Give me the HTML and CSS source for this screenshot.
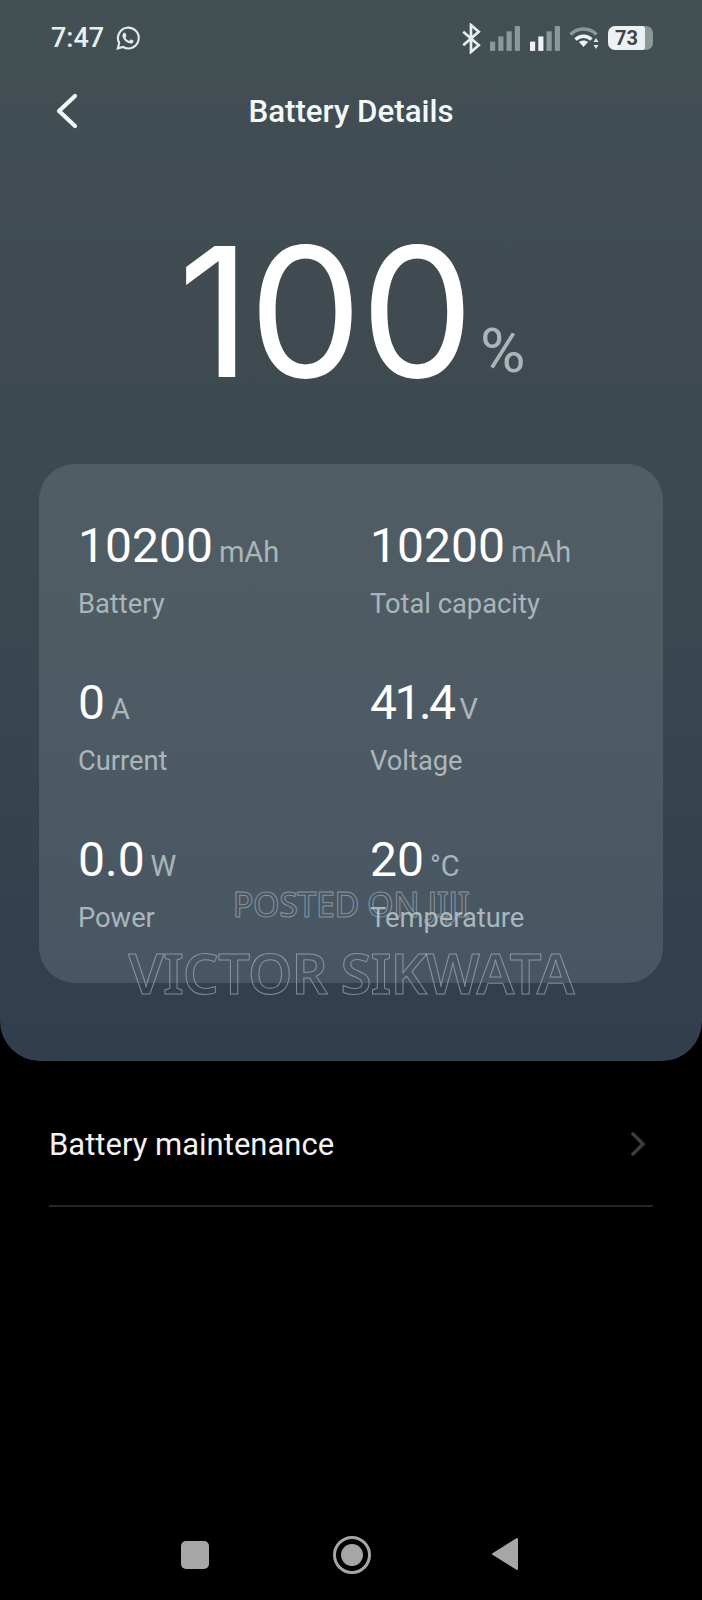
FILE: index.html
```html
<!DOCTYPE html>
<html lang="en">
<head>
<meta charset="utf-8">
<title>Battery Details</title>
<link rel="stylesheet" href="styles.css">
</head>
<body>
<div class="screen">
  <section class="panel">
    <div class="status">
      <div class="status-left">
        <span class="time">7:47</span>
        <svg class="wa" viewBox="0 0 24 24" fill="none" stroke="#e4eaea" stroke-width="2"><path d="M2.6 21.6l1.3-5A9.6 9.6 0 1 1 7.5 20.3z"/><path fill="#e4eaea" stroke="none" d="M8.9 7.2c.3 0 .6 0 .8.5l.8 1.9c.1.3 0 .5-.1.7l-.7.9c-.1.2-.1.3 0 .5.8 1.4 1.8 2.3 3.2 2.9.2.1.4.1.5-.1l.9-1.1c.2-.2.4-.2.6-.1l1.9.9c.3.1.4.3.4.5 0 1.500-1.300 2.400-2.600 2.400-3.600-.2-7.300-3.600-7.800-7.100-.1-1.200.5-2.300 1.200-2.700.2-.1.4-.1.6-.1z"/></svg>
      </div>
      <div class="status-right">
        <svg class="bt" viewBox="0 0 20 30" fill="none" stroke="#e8eeee" stroke-width="2.600"><path d="M2 8.500l15 13-7.500 6.500V2l7.500 6.500-15 13"/></svg>
        <svg class="signal" viewBox="0 0 30 24"><rect x="0" y="15" width="5" height="9" fill="#8b9898"/><rect x="8" y="10" width="5" height="14" fill="#8b9898"/><rect x="16" y="5" width="5" height="19" fill="#8b9898"/><rect x="24" y="0" width="5" height="24" fill="#8b9898"/></svg>
        <svg class="signal" viewBox="0 0 30 24"><rect x="0" y="15" width="5" height="9" fill="#eef2f2"/><rect x="8" y="10" width="5" height="14" fill="#eef2f2"/><rect x="16" y="5" width="5" height="19" fill="#8b9898"/><rect x="24" y="0" width="5" height="24" fill="#8b9898"/></svg>
        <svg class="wifi" viewBox="0 0 32 24" fill="none"><path d="M1 8.500C8 1 20 1 27 8.500" stroke="#8b9898" stroke-width="3.500"/><path d="M6 13.500c4.500-4.500 11.500-4.500 16 0" stroke="#eef2f2" stroke-width="3.500"/><path d="M9.500 16l4.500 5 4.500-5c-2.500-2-6.500-2-9 0z" fill="#eef2f2"/><path d="M26.500 12l2.500 4h-5zM26.500 23l2.500-4h-5z" fill="#dfe5e5"/></svg>
        <div class="battery"><span class="battery-fill">73</span><span class="battery-cap"></span></div>
      </div>
    </div>
    <header class="nav">
      <svg class="back" viewBox="0 0 24 36" fill="none" stroke="#f4f7f7" stroke-width="4.200" stroke-linecap="round" stroke-linejoin="round"><path d="M20 3L4 18l16 15"/></svg>
      <h1 class="title">Battery Details</h1>
    </header>
    <div class="level"><span class="level-num">100</span><span class="level-unit">%</span></div>
    <div class="card">
      <div class="stat"><div class="val">10200<span class="unit">mAh</span></div><div class="lab">Battery</div></div>
      <div class="stat"><div class="val">10200<span class="unit">mAh</span></div><div class="lab">Total capacity</div></div>
      <div class="stat"><div class="val">0<span class="unit">A</span></div><div class="lab">Current</div></div>
      <div class="stat"><div class="val val-tight">41.4<span class="unit">V</span></div><div class="lab">Voltage</div></div>
      <div class="stat"><div class="val">0.0<span class="unit">W</span></div><div class="lab">Power</div></div>
      <div class="stat"><div class="val">20<span class="unit">°C</span></div><div class="lab">Temperature</div></div>
    </div>
    <div class="mark mark-small">POSTED ON JIJI</div>
    <div class="mark mark-big">VICTOR SIKWATA</div>
  </section>
  <section class="list">
    <div class="row">
      <span class="row-text">Battery maintenance</span>
      <svg class="chev" viewBox="0 0 16 26" fill="none" stroke="#3c3c3c" stroke-width="3.500"><path d="M2 2l11 11L2 24"/></svg>
    </div>
  </section>
  <nav class="sysnav">
    <span class="sys-square"></span>
    <span class="sys-home"><span class="sys-dot"></span></span>
    <svg class="sys-back" viewBox="0 0 28 34"><path d="M26 2v30L2 17z" fill="#a6a6a6" stroke="#a6a6a6" stroke-width="2" stroke-linejoin="round"/></svg>
  </nav>
</div>
</body>
</html>
```

FILE: styles.css
```css
* { box-sizing: border-box; }
html, body { margin: 0; padding: 0; background: #000; }
.screen {
  width: 702px;
  height: 1600px;
  display: flex;
  flex-direction: column;
  font-family: Roboto, "Liberation Sans", sans-serif;
  background: #000;
  overflow: hidden;
}
.panel {
  position: relative;
  height: 1061px;
  border-radius: 0 0 40px 40px;
  background: linear-gradient(180deg, #424f53 0%, #3f4b51 30%, #39474f 60%, #303e4e 100%);
  flex: none;
}
.status {
  height: 76px;
  padding: 22px 49px 0 51px;
  display: flex;
  justify-content: space-between;
  align-items: flex-start;
}
.status-left { display: flex; align-items: center; gap: 11px; height: 32px; }
.time { font-size: 27px; font-weight: 500; color: #e9eeee; }
.wa { width: 26px; height: 26px; }
.status-right { display: flex; align-items: center; height: 32px; }
.bt { width: 23px; height: 31px; margin-right: 7px; }
.signal { width: 31px; height: 25px; margin-right: 8.500px; }
.wifi { width: 33px; height: 24px; margin-right: 6px; }
.battery { display: flex; align-items: center; }
.battery-fill {
  width: 37px;
  height: 24px;
  background: #eef1f1;
  color: #39464a;
  border-radius: 7px 2px 2px 7px;
  font-size: 20px;
  font-weight: 700;
  line-height: 24px;
  text-align: center;
}
.battery-cap {
  width: 8px;
  height: 24px;
  background: #8b9898;
  border-radius: 0 7px 7px 0;
}
.nav {
  height: 72px;
  padding-bottom: 2px;
  display: flex;
  align-items: center;
  justify-content: center;
  position: relative;
}
.back { position: absolute; left: 55px; top: 17px; width: 24px; height: 36px; }
.title { margin: 0; font-size: 31.300px; font-weight: 500; color: #f4f7f7; }
.level {
  height: 316px;
  padding: 64px 0 0 1px;
  display: flex;
  align-items: flex-start;
  justify-content: center;
  color: #fff;
}
.level-num { font-family: Inter, Roboto, sans-serif; font-size: 180px; line-height: 200px; font-weight: 400; letter-spacing: -2px; }
.level-unit { font-size: 62px; line-height: 70px; margin: 104px 0 0 8px; color: #a9b5b9; font-weight: 400; }
.card {
  margin: 0 39px;
  height: 519px;
  border-radius: 36px;
  background: linear-gradient(180deg, #505d64 0%, #4d5a63 55%, #485663 100%);
  padding: 54px 0 0 39px;
  display: grid;
  grid-template-columns: 292px 1fr;
  grid-auto-rows: 157px;
}
.val { font-size: 48px; line-height: 56px; color: #fff; display: flex; align-items: baseline; }
.val-tight { letter-spacing: -2.500px; }
.unit { font-size: 29px; letter-spacing: 0; color: #a9b5b9; margin-left: 6px; }
.lab { font-size: 27.300px; line-height: 32px; margin-top: 8px; color: #aab6bb; }
.mark {
  position: absolute;
  left: 0;
  right: 0;
  text-align: center;
  font-family: "Noto Sans", sans-serif;
  color: transparent;
  -webkit-text-stroke: 1px rgba(190, 200, 205, 0.55);
  white-space: nowrap;
}
.mark-small { top: 884px; font-size: 34px; line-height: 40px; font-weight: 500; letter-spacing: -0.500px; }
.mark-big { top: 938px; font-size: 56.500px; line-height: 70px; font-weight: 600; letter-spacing: -1px; }
.list { padding: 0 49px; flex: none; }
.row {
  height: 146px;
  padding-top: 22px;
  border-bottom: 2px solid #262626;
  display: flex;
  align-items: center;
  justify-content: space-between;
}
.row-text { font-size: 31px; color: #f2f2f2; }
.chev { width: 16px; height: 26px; margin-right: 7px; }
.sysnav {
  flex: 1;
  display: flex;
  align-items: flex-start;
  padding: 333px 0 0 181px;
}
.sys-square { width: 28px; height: 28px; border-radius: 5px; background: #a6a6a6; margin-top: 1px; }
.sys-home {
  width: 38px;
  height: 38px;
  border: 3px solid #a6a6a6;
  border-radius: 50%;
  margin: -4px 0 0 124px;
  display: flex;
  align-items: center;
  justify-content: center;
}
.sys-dot { width: 22px; height: 22px; border-radius: 50%; background: #a6a6a6; }
.sys-back { width: 28px; height: 34px; margin: -3px 0 0 120px; }
```
